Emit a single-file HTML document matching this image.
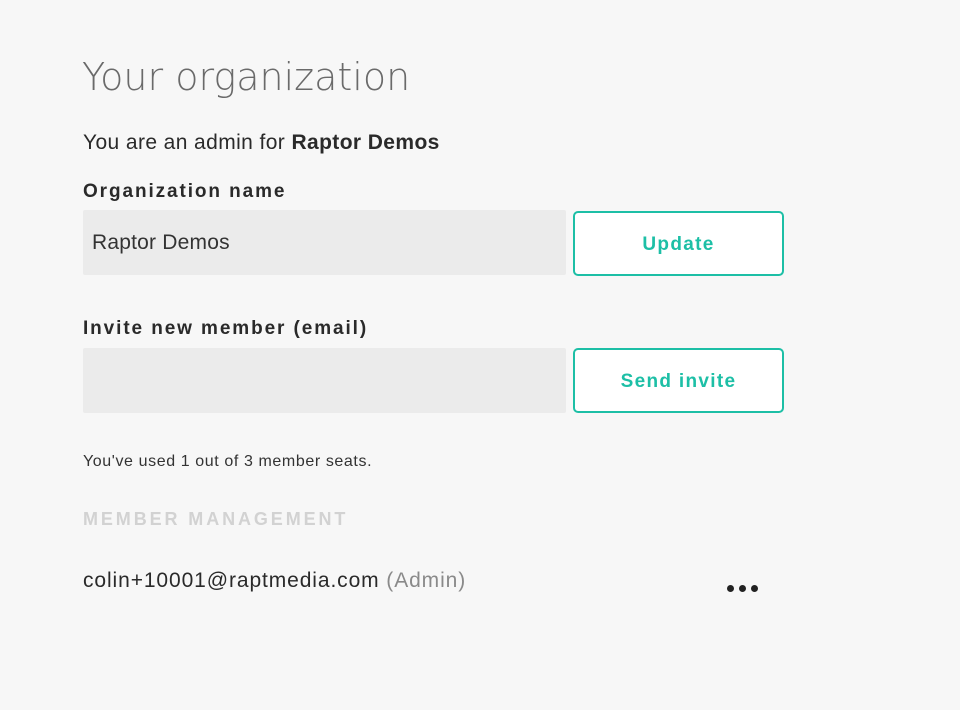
<!DOCTYPE html>
<html><head><meta charset="utf-8"><style>
html,body{margin:0;padding:0;background:#f7f7f7;width:960px;height:710px;overflow:hidden;font-family:"Liberation Sans",sans-serif;color:#2a2a2a}
.abs{position:absolute;white-space:nowrap}
h1{position:absolute;left:82px;top:55px;margin:0;font-size:38px;color:#6a6a6a;font-family:"DejaVu Sans","Liberation Sans",sans-serif;font-weight:200;white-space:nowrap}
.input{position:absolute;left:83px;width:483px;height:65px;background:#ebebeb;border-radius:2px}
.btn{position:absolute;left:573px;width:207px;height:61px;border:2px solid #1dbfa6;border-radius:5px;background:#fff;color:#1dbfa6;font-weight:bold;font-size:19px;text-align:center;line-height:63px;letter-spacing:1.3px}
.label{font-weight:bold;font-size:19px;letter-spacing:1.9px;color:#2a2a2a}
.dot{position:absolute;top:585px;width:7px;height:7px;border-radius:50%;background:#222}
</style></head><body>
<h1>Your organization</h1>
<div class="abs" style="left:83px;top:131px;font-size:21px;letter-spacing:0.4px">You are an admin for <b>Raptor Demos</b></div>
<div class="abs label" style="left:83px;top:181px">Organization name</div>
<div class="input" style="top:210px"></div>
<div class="abs" style="left:92px;top:231px;font-size:21px;color:#333;letter-spacing:0.2px">Raptor Demos</div>
<div class="btn" style="top:211px">Update</div>
<div class="abs label" style="left:83px;top:318px">Invite new member (email)</div>
<div class="input" style="top:348px"></div>
<div class="btn" style="top:348px">Send invite</div>
<div class="abs" style="left:83px;top:453px;font-size:16px;color:#333;letter-spacing:0.6px">You've used 1 out of 3 member seats.</div>
<div class="abs" style="left:83px;top:509px;font-size:18px;font-weight:bold;color:#d2d2d2;letter-spacing:2.9px">MEMBER MANAGEMENT</div>
<div class="abs" style="left:83px;top:569px;font-size:21px;color:#2a2a2a;letter-spacing:0.9px">colin+10001@raptmedia.com <span style="color:#8a8a8a">(Admin)</span></div>
<div class="dot" style="left:727px"></div>
<div class="dot" style="left:739px"></div>
<div class="dot" style="left:751px"></div>
</body></html>
